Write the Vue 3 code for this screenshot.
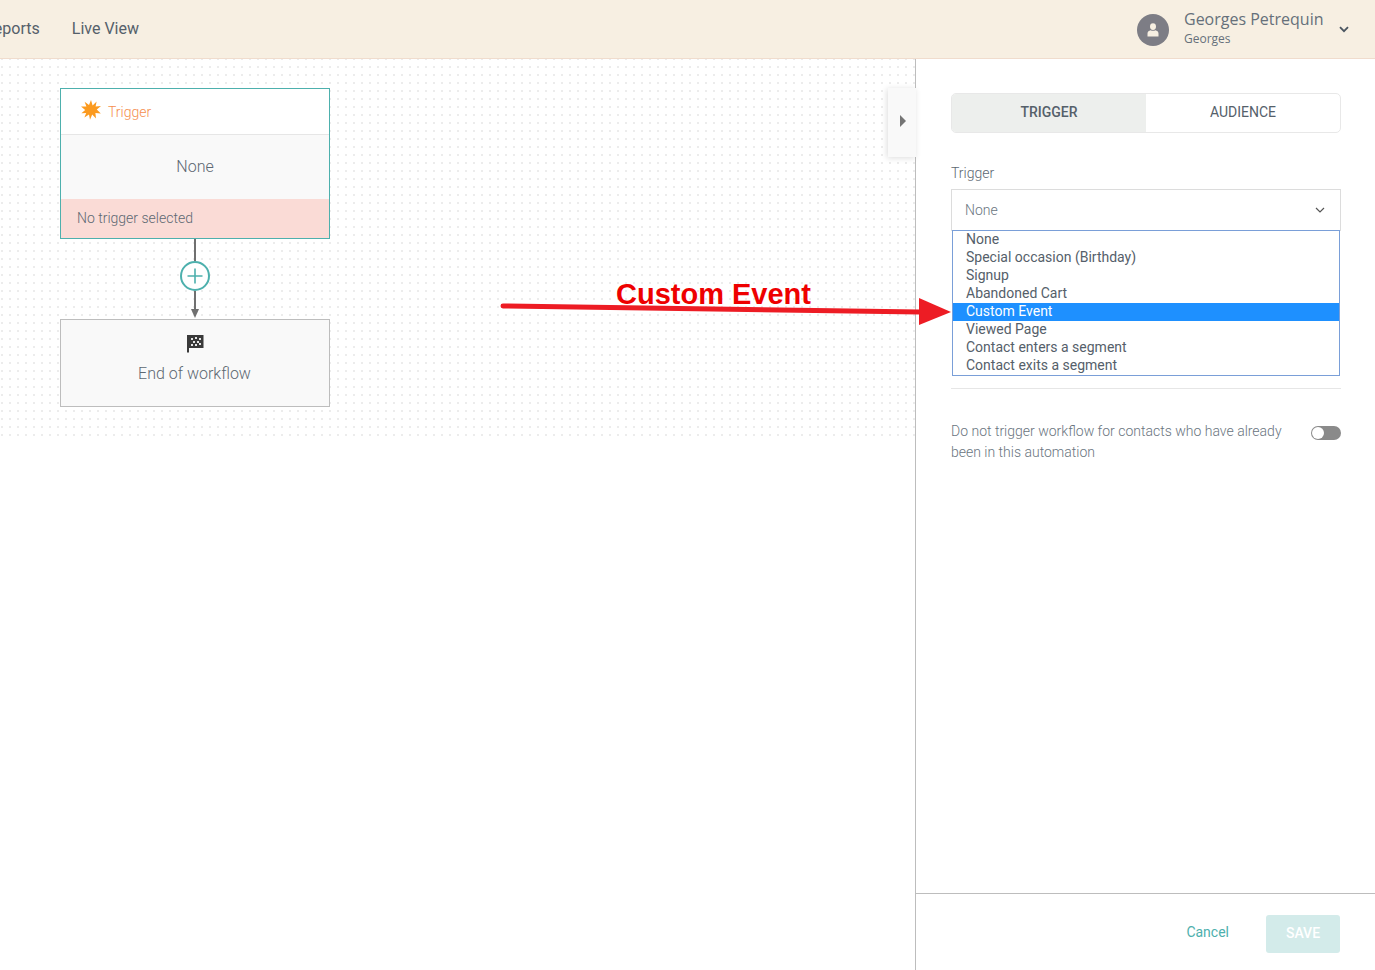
<script setup>
const triggers = [
  'None',
  'Special occasion (Birthday)',
  'Signup',
  'Abandoned Cart',
  'Custom Event',
  'Viewed Page',
  'Contact enters a segment',
  'Contact exits a segment'
]
const selected = 'Custom Event'
</script>

<template>
  <div class="page">
    <header class="topbar">
      <nav class="nav">
        <a>Reports</a>
        <a>Live View</a>
      </nav>
      <div class="user">
        <span class="avatar">
          <svg width="12" height="14" viewBox="0 0 12 14">
            <ellipse cx="6" cy="3.6" rx="3" ry="3.4" fill="#f7efe2" />
            <path d="M0.5 13.5 V10.5 C0.5 8.6 2 7.6 3.6 7.2 C5 8 7 8 8.4 7.2 C10 7.6 11.5 8.6 11.5 10.5 V13.5 Z" fill="#f7efe2" />
          </svg>
        </span>
        <div class="user-text">
          <div class="user-name">Georges Petrequin</div>
          <div class="user-sub">Georges</div>
        </div>
        <svg class="user-caret" width="10" height="7" viewBox="0 0 10 7">
          <path d="M1 1.2 L5 5.2 L9 1.2" fill="none" stroke="#4a5560" stroke-width="1.8" />
        </svg>
      </div>
    </header>

    <main class="main">
      <section class="workspace">
        <div class="canvas">
          <div class="node node-trigger">
            <div class="node-head">
              <svg class="burst" width="20" height="20" viewBox="0 0 20 20">
                <polygon
                  fill="#fb9a1f"
                  points="10,0 11.6,5.4 15.6,1.4 14.6,6.6 20,6 15.8,9.6 19.8,13.4 14.4,13 15,18.6 11.2,14.6 9,19.8 8,14.6 3.4,17.6 5.2,13 0.4,13.2 4.2,10 0,6.4 5.4,6.6 3.6,1.8 8,5"
                />
              </svg>
              <span>Trigger</span>
            </div>
            <div class="node-body">None</div>
            <div class="node-error">No trigger selected</div>
          </div>

          <div class="line line-top"></div>
          <div class="add">
            <svg width="16" height="16" viewBox="0 0 16 16">
              <path d="M8 0.5 V15.5 M0.5 8 H15.5" stroke="#4db0ad" stroke-width="1.6" fill="none" />
            </svg>
          </div>
          <div class="line line-bottom"></div>
          <div class="arrow-tip"></div>

          <div class="node node-end">
            <svg width="17" height="18" viewBox="0 0 17 18">
              <path d="M0 0 H16.5 V13 H2 V17.5 H0 Z" fill="#3a3a3a" />
              <path
                d="M4 3h2v2h-2z M8 2h2v2h-2z M12 3h2v2h-2z M6 6h2v2h-2z M10 6h2v2h-2z M4 9h2v2h-2z M8 9h2v2h-2z M12 8h2v2h-2z"
                fill="#e6e6e6"
              />
            </svg>
            <div class="end-label">End of workflow</div>
          </div>
        </div>

        <!-- annotation drawn over the screenshot -->
        <div class="note">Custom Event</div>
        <svg class="note-arrow" width="460" height="40" viewBox="0 0 460 40">
          <path d="M3 9 L420 15" stroke="#ed1c24" stroke-width="5" stroke-linecap="round" fill="none" />
          <polygon points="419,1 451,15 419,28" fill="#ed1c24" />
        </svg>

        <div class="collapse">
          <span class="collapse-tri"></span>
        </div>
      </section>

      <aside class="panel">
        <div class="panel-body">
          <div class="tabs">
            <div class="tab tab-active">TRIGGER</div>
            <div class="tab">AUDIENCE</div>
          </div>

          <label class="field-label">Trigger</label>
          <div class="select-wrap">
            <div class="select">
              <span>None</span>
              <svg width="10" height="6" viewBox="0 0 10 6">
                <path d="M1 1 L5 5 L9 1" fill="none" stroke="#555" stroke-width="1.2" />
              </svg>
            </div>
            <ul class="options">
              <li v-for="t in triggers" :key="t" :class="{ current: t === selected }">{{ t }}</li>
            </ul>
          </div>

          <div class="divider"></div>

          <div class="setting">
            <p>Do not trigger workflow for contacts who have already been in this automation</p>
            <span class="toggle"><span class="knob"></span></span>
          </div>
        </div>

        <footer class="panel-foot">
          <a class="cancel">Cancel</a>
          <button class="save">SAVE</button>
        </footer>
      </aside>
    </main>
  </div>
</template>

<style>
html, body {
  margin: 0;
  background: #fff;
  overflow: hidden;
}
</style>

<style scoped>
.page {
  width: 1375px;
  height: 970px;
  display: flex;
  flex-direction: column;
  font-family: Roboto, "Liberation Sans", sans-serif;
  overflow: hidden;
}

.topbar {
  height: 58px;
  flex: none;
  display: flex;
  align-items: center;
  justify-content: space-between;
  background: #f7efe2;
  border-bottom: 1px solid #f0dccd;
}
.nav {
  display: flex;
  gap: 32px;
  margin-left: -16px;
  padding-bottom: 2px;
  font-size: 16px;
  color: #55606a;
}
.user {
  display: flex;
  align-items: center;
  margin-right: 26px;
  font-family: "Open Sans", sans-serif;
  color: #66707a;
}
.avatar {
  width: 32px;
  height: 32px;
  margin-top: 2px;
  border-radius: 50%;
  background: #7d7d85;
  display: flex;
  align-items: center;
  justify-content: center;
}
.user-text {
  margin-left: 15px;
  width: 155px;
  padding-bottom: 3px;
}
.user-name {
  font-size: 16px;
  line-height: 20px;
}
.user-sub {
  font-size: 12px;
  line-height: 17px;
  margin-top: 1px;
}

.main {
  flex: 1;
  display: flex;
  min-height: 0;
}
.workspace {
  position: relative;
  width: 915px;
  flex: none;
}
.canvas {
  height: 349px;
  padding: 29px 585px 0 60px;
  display: flex;
  flex-direction: column;
  align-items: center;
  width: 270px;
  /* 2px square dots every 8px: white bands over grey stripes */
  background-image:
    linear-gradient(#fff 6px, transparent 6px),
    linear-gradient(90deg, #fff 6px, #ececec 6px);
  background-size: 8px 8px;
  background-position: 3px 1px;
}
.node {
  width: 270px;
  box-sizing: border-box;
  flex: none;
}
.node-trigger {
  height: 151px;
  border: 1px solid #4db0ad;
  background: #fff;
  display: flex;
  flex-direction: column;
}
.node-head {
  height: 45px;
  flex: none;
  display: flex;
  align-items: center;
  padding-left: 20px;
  border-bottom: 1px solid #e6e6e6;
  font-size: 14px;
  font-weight: 300;
  color: #f58f4f;
}
.burst {
  margin: -3px 7px 0 0;
}
.node-body {
  flex: 1;
  display: flex;
  align-items: center;
  justify-content: center;
  padding-bottom: 2px;
  background: #f9f9f9;
  font-size: 16px;
  font-weight: 300;
  color: #5d6872;
}
.node-error {
  height: 39px;
  flex: none;
  display: flex;
  align-items: center;
  padding: 0 0 2px 16px;
  box-sizing: border-box;
  background: #fadbd6;
  font-size: 14px;
  font-weight: 300;
  color: #5d6872;
}
.line {
  width: 2px;
  background: #707070;
  flex: none;
}
.line-top {
  height: 22px;
}
.line-bottom {
  height: 19px;
}
.arrow-tip {
  flex: none;
  width: 0;
  height: 0;
  border-left: 4px solid transparent;
  border-right: 4px solid transparent;
  border-top: 9px solid #707070;
  margin-top: -1px;
  margin-bottom: 1px;
}
.add {
  width: 30px;
  height: 30px;
  flex: none;
  box-sizing: border-box;
  border: 2px solid #4db0ad;
  border-radius: 50%;
  background: #fff;
  display: flex;
  align-items: center;
  justify-content: center;
}
.node-end {
  height: 88px;
  border: 1px solid #bdbdbd;
  background: #f9f9f9;
  display: flex;
  flex-direction: column;
  align-items: center;
  padding-top: 15px;
}
.end-label {
  margin-top: 11px;
  margin-right: 1px;
  font-size: 16px;
  font-weight: 300;
  color: #5d6872;
}

.note {
  position: absolute;
  left: 616px;
  top: 216px;
  font-family: "Liberation Sans", Arial, sans-serif;
  font-size: 29px;
  line-height: 38px;
  font-weight: 700;
  color: #ee0000;
  white-space: nowrap;
  z-index: 2;
}
.note-arrow {
  position: absolute;
  left: 500px;
  top: 238px;
  z-index: 3;
}
.collapse {
  position: absolute;
  top: 29px;
  right: -1px;
  width: 28px;
  height: 69px;
  background: #f9f9f9;
  box-shadow: -1px 1px 6px rgba(0, 0, 0, 0.14);
  display: flex;
  align-items: center;
  justify-content: center;
  z-index: 2;
}
.collapse-tri {
  width: 0;
  height: 0;
  border-top: 6px solid transparent;
  border-bottom: 6px solid transparent;
  border-left: 6px solid #757575;
  margin: 0 0 3px 2px;
}

.panel {
  flex: 1;
  display: flex;
  flex-direction: column;
  border-left: 1px solid #bdbdbd;
  min-width: 0;
}
.panel-body {
  flex: 1;
  padding: 34px 34px 0 35px;
}
.tabs {
  height: 40px;
  box-sizing: border-box;
  display: flex;
  border: 1px solid #e8e8e8;
  border-radius: 5px;
  overflow: hidden;
}
.tab {
  flex: 1;
  display: flex;
  align-items: center;
  justify-content: center;
  padding-bottom: 2px;
  font-size: 14px;
  color: #55606a;
}
.tab-active {
  background: #edefed;
  font-weight: 500;
  flex: none;
  width: 194px;
}
.field-label {
  display: block;
  margin-top: 32px;
  font-size: 14px;
  line-height: 17px;
  font-weight: 300;
  color: #5d6872;
}
.select-wrap {
  position: relative;
  margin-top: 7px;
}
.select {
  height: 42px;
  box-sizing: border-box;
  display: flex;
  align-items: center;
  justify-content: space-between;
  padding: 0 15px 0 13px;
  border: 1px solid #dcdcdc;
  font-size: 14px;
  font-weight: 300;
  color: #6a7580;
}
.options {
  position: absolute;
  left: 1px;
  right: 1px;
  top: 41px;
  margin: 0;
  padding: 0;
  list-style: none;
  background: #fff;
  border: 1px solid #7a9fd8;
  z-index: 1;
}
.options li {
  height: 18px;
  box-sizing: border-box;
  line-height: 16px;
  padding: 0 0 2px 13px;
  font-size: 14px;
  color: #55606a;
}
.options li.current {
  background: #1e90ff;
  color: #fff;
}
.divider {
  height: 1px;
  margin-top: 157px;
  background: #e6e6e6;
}
.setting {
  display: flex;
  justify-content: space-between;
  margin-top: 32px;
}
.setting p {
  margin: 0;
  width: 340px;
  font-size: 14px;
  line-height: 21px;
  font-weight: 300;
  color: #6a7580;
}
.toggle {
  position: relative;
  width: 30px;
  height: 14px;
  margin-top: 5px;
  border-radius: 7px;
  background: #8a8a8a;
  flex: none;
}
.knob {
  position: absolute;
  left: 1px;
  top: 1px;
  width: 12px;
  height: 12px;
  border-radius: 50%;
  background: #fff;
}
.panel-foot {
  height: 76px;
  flex: none;
  display: flex;
  align-items: center;
  justify-content: flex-end;
  padding: 0 35px 0 0;
  border-top: 1px solid #bdbdbd;
}
.cancel {
  margin-right: 37px;
  font-size: 14px;
  color: #4db0ad;
}
.save {
  width: 74px;
  height: 38px;
  margin-top: 4px;
  padding: 0 0 2px;
  border: 0;
  border-radius: 3px;
  background: #d3ebea;
  color: #fff;
  font-family: inherit;
  font-size: 14px;
  font-weight: 500;
}
</style>
